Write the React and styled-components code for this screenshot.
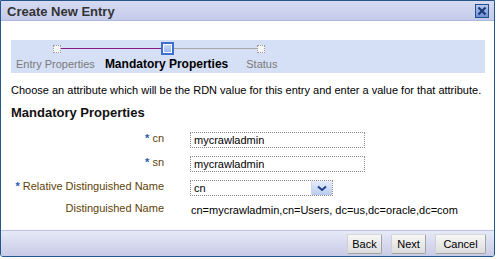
import React from "react";
import styled, { createGlobalStyle } from "styled-components";

const Global = createGlobalStyle`
  html, body { margin: 0; padding: 0; background: #ffffff; }
  body { font-family: "Liberation Sans", Arial, sans-serif; }
`;

const Dialog = styled.div`
  box-sizing: border-box;
  width: 495px;
  height: 257px;
  border: 1px solid #235689;
  border-radius: 0 0 3px 3px;
  display: flex;
  flex-direction: column;
  background: #ffffff;
  overflow: hidden;
`;

const TitleBar = styled.div`
  height: 19px;
  flex: none;
  display: flex;
  align-items: center;
  justify-content: space-between;
  padding: 0 5px 0 6px;
  background: linear-gradient(#d6dbf2, #c4cbea);
  border-bottom: 1px solid #aeb8de;
`;

const Title = styled.span`
  font-size: 13px;
  font-weight: bold;
  color: #333333;
  padding-top: 1px;
`;

const CloseBtn = styled.button`
  box-sizing: border-box;
  width: 14px;
  height: 14px;
  padding: 0;
  margin-top: 1px;
  border: 1px solid #24508c;
  background: linear-gradient(#b6c8ee, #6f8fd6);
  display: flex;
  align-items: center;
  justify-content: center;
`;

const Body = styled.div`
  flex: 1;
  display: flex;
  flex-direction: column;
  padding: 19px 9px 0 10px;
  color: #000000;
`;

const StepBand = styled.div`
  height: 33px;
  box-sizing: border-box;
  background: #d5dff5;
  display: flex;
  flex-direction: column;
  padding-top: 2px;
`;

const Track = styled.div`
  height: 13px;
  display: flex;
  align-items: center;
  padding-left: 42px;
`;

const Node = styled.span`
  box-sizing: border-box;
  flex: none;
  width: ${(p) => (p.$active ? 13 : 8)}px;
  height: ${(p) => (p.$active ? 13 : 8)}px;
  border: ${(p) => (p.$active ? "2px solid #3d6fd0" : "1px dotted #9a9a9a")};
  background: ${(p) =>
    p.$active ? "linear-gradient(#cfe0fb, #8fb2ec)" : "#f4f4f4"};
  box-shadow: ${(p) => (p.$active ? "inset 0 0 0 1px #ffffff" : "none")};
`;

const Line = styled.span`
  flex: none;
  width: ${(p) => p.$w}px;
  height: 1px;
  background: ${(p) => (p.$done ? "#8a1a8a" : "#a9a9a9")};
`;

const Labels = styled.div`
  display: flex;
  padding-left: 5px;
  margin-top: 2px;
  gap: 10px;
  font-size: 11px;
  line-height: 14px;
`;

const StepLabel = styled.span`
  color: ${(p) => (p.$active ? "#000000" : "#7a7a7a")};
  font-weight: ${(p) => (p.$active ? "bold" : "normal")};
  font-size: ${(p) => (p.$active ? "12px" : "11px")};
  margin-right: ${(p) => p.$mr || 0}px;
`;

const Instruction = styled.p`
  margin: 11px 0 0 0;
  font-size: 11px;
  line-height: 13px;
  color: #000000;
  white-space: nowrap;
`;

const Heading = styled.h2`
  margin: 8px 0 0 0;
  font-size: 13px;
  line-height: 16px;
  font-weight: bold;
  color: #111111;
`;

const Form = styled.div`
  display: grid;
  grid-template-columns: 153px 1fr;
  column-gap: 26px;
  row-gap: 8px;
  margin-top: 11px;
  grid-auto-rows: 16px;
`;

const Label = styled.label`
  text-align: right;
  font-size: 11px;
  line-height: 12px;
  margin-top: ${(p) => p.$shift || 0}px;
  color: #5e3f06;
  white-space: nowrap;
`;

const Star = styled.span`
  color: #2a5ab0;
  font-weight: bold;
  margin-right: 3px;
`;

const Input = styled.div`
  box-sizing: border-box;
  width: ${(p) => p.$w}px;
  height: 16px;
  border: 1px dotted #8c8c8c;
  font-size: 11px;
  line-height: 14px;
  padding-left: 3px;
  color: #000000;
  display: flex;
  align-items: center;
  justify-content: space-between;
`;

const Arrow = styled.span`
  box-sizing: border-box;
  width: 21px;
  height: 14px;
  background: linear-gradient(#e6edfb, #b9caf0);
  border-left: 1px solid #c9d4ee;
  display: flex;
  align-items: center;
  justify-content: center;
`;

const Value = styled.span`
  font-size: 11px;
  line-height: 12px;
  padding-left: 1px;
  white-space: nowrap;
  color: #000000;
`;

const Footer = styled.div`
  height: 26px;
  flex: none;
  box-sizing: border-box;
  border-top: 1px solid #b8bfe2;
  background: linear-gradient(#e6e9f7, #c8cbe6);
  display: flex;
  align-items: center;
  justify-content: flex-end;
  gap: 9px;
  padding-right: 8px;
`;

const Button = styled.button`
  box-sizing: border-box;
  width: ${(p) => p.$w}px;
  height: 20px;
  padding: 0;
  font-family: "Liberation Sans", Arial, sans-serif;
  font-size: 11px;
  color: #000000;
  border: 1px solid #a3a3a3;
  border-top-color: #d8d8d8;
  border-left-color: #d0d0d0;
  border-radius: 2px;
  background: linear-gradient(#f7f7f7, #dcdcdc);
`;

export default function App() {
  return (
    <>
      <Global />
      <Dialog>
        <TitleBar>
          <Title>Create New Entry</Title>
          <CloseBtn aria-label="Close">
            <svg width="10" height="10" viewBox="0 0 10 10">
              <path d="M1.5 1.5 L8.5 8.5 M8.5 1.5 L1.5 8.5" stroke="#1c3a78" strokeWidth="2.2" />
            </svg>
          </CloseBtn>
        </TitleBar>
        <Body>
          <StepBand>
            <Track>
              <Node />
              <Line $w={100} $done />
              <Node $active />
              <Line $w={83} />
              <Node />
            </Track>
            <Labels>
              <StepLabel>Entry Properties</StepLabel>
              <StepLabel $active $mr={8}>Mandatory Properties</StepLabel>
              <StepLabel>Status</StepLabel>
            </Labels>
          </StepBand>
          <Instruction>
            Choose an attribute which will be the RDN value for this entry and enter a value for that attribute.
          </Instruction>
          <Heading>Mandatory Properties</Heading>
          <Form>
            <Label><Star>*</Star>cn</Label>
            <Input $w={175}>mycrawladmin</Input>
            <Label><Star>*</Star>sn</Label>
            <Input $w={175}>mycrawladmin</Input>
            <Label><Star>*</Star>Relative Distinguished Name</Label>
            <Input $w={143}>
              cn
              <Arrow>
                <svg width="10" height="7" viewBox="0 0 10 7">
                  <path d="M1 1.5 L5 5 L9 1.5" fill="none" stroke="#1d3d8c" strokeWidth="2" />
                </svg>
              </Arrow>
            </Input>
            <Label $shift={-2}>Distinguished Name</Label>
            <Value>cn=mycrawladmin,cn=Users, dc=us,dc=oracle,dc=com</Value>
          </Form>
        </Body>
        <Footer>
          <Button $w={35}>Back</Button>
          <Button $w={35}>Next</Button>
          <Button $w={51}>Cancel</Button>
        </Footer>
      </Dialog>
    </>
  );
}
